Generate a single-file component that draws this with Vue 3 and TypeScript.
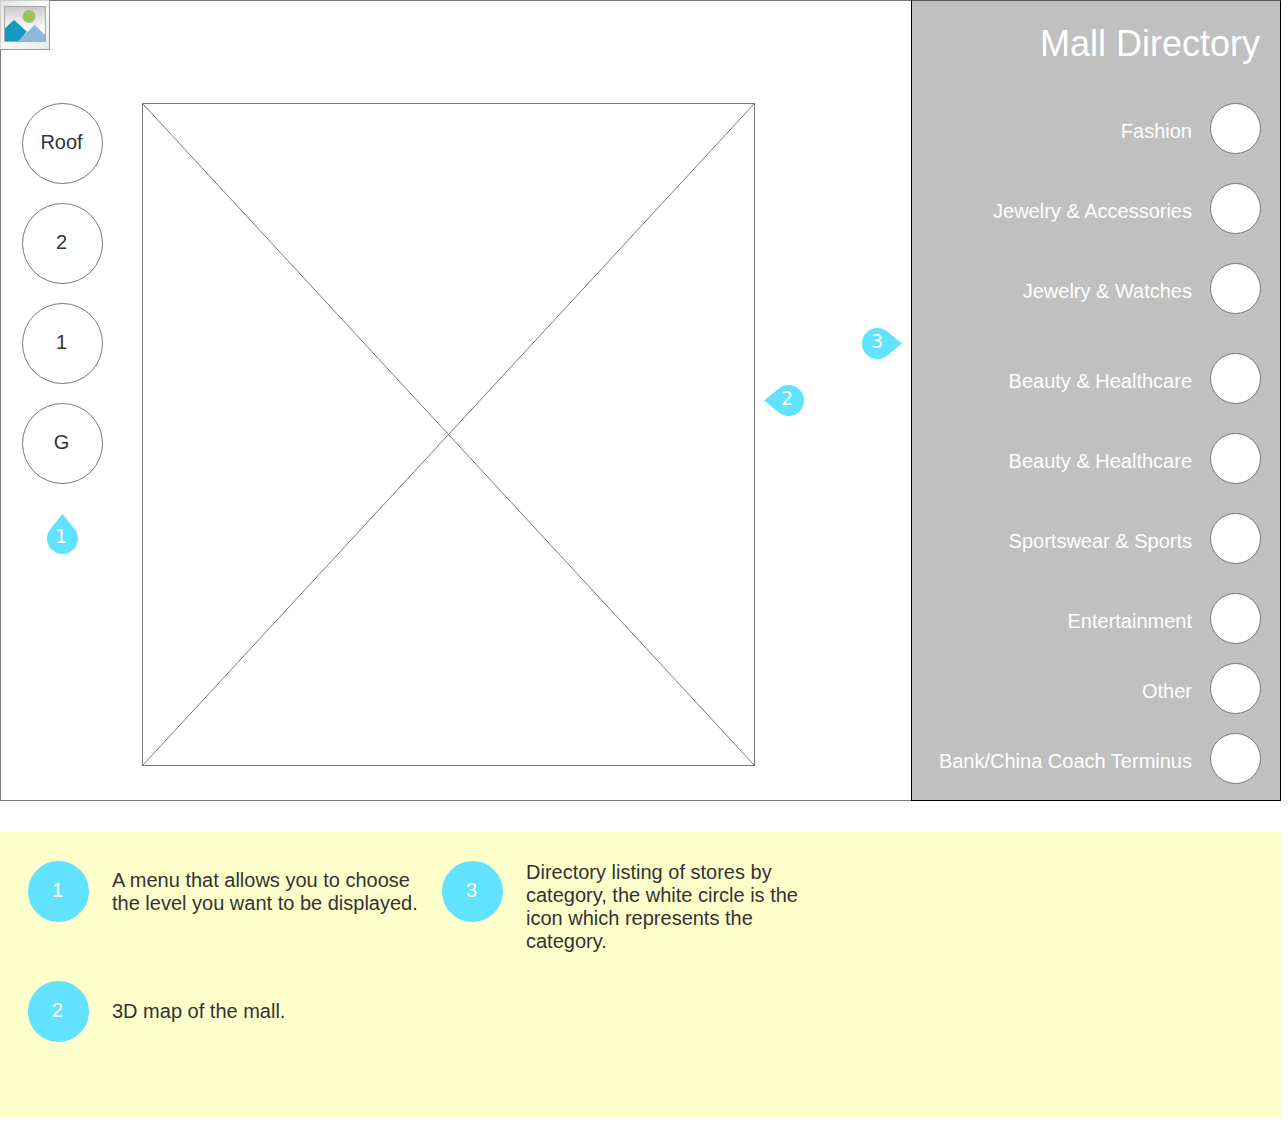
<script setup lang="ts">
type Direction = 'up' | 'left' | 'right'

interface Drop {
  width: number
  height: number
  path: string
  x: number
  y: number
}

interface Category {
  name: string
  spacing?: 'wide' | 'tight'
}

interface Note {
  id: number
  text: string
}

const levels: string[] = ['Roof', '2', '1', 'G']

const categories: Category[] = [
  { name: 'Fashion' },
  { name: 'Jewelry & Accessories' },
  { name: 'Jewelry & Watches' },
  { name: 'Beauty & Healthcare', spacing: 'wide' },
  { name: 'Beauty & Healthcare' },
  { name: 'Sportswear & Sports' },
  { name: 'Entertainment' },
  { name: 'Other', spacing: 'tight' },
  { name: 'Bank/China Coach Terminus', spacing: 'tight' },
]

const notes: Note[] = [
  { id: 1, text: 'A menu that allows you to choose the level you want to be displayed.' },
  {
    id: 3,
    text: 'Directory listing of stores by category, the white circle is the icon which represents the category.',
  },
  { id: 2, text: '3D map of the mall.' },
]

// Teardrop outlines, one for each way a marker can point
const drops: Record<Direction, Drop> = {
  up: {
    width: 31,
    height: 40,
    path: 'M15.5 0 L27 14.2 C29.5 17.3 31 20.5 31 24.5 A15.5 15.5 0 0 1 0 24.5 C0 20.5 1.5 17.3 4 14.2 Z',
    x: 14,
    y: 29,
  },
  left: {
    width: 40,
    height: 31,
    path: 'M0 15.5 L14.2 4 C17.3 1.5 20.5 0 24.5 0 A15.5 15.5 0 0 1 24.5 31 C20.5 31 17.3 29.5 14.2 27 Z',
    x: 23,
    y: 20,
  },
  right: {
    width: 40,
    height: 31,
    path: 'M40 15.5 L25.8 4 C22.7 1.5 19.5 0 15.5 0 A15.5 15.5 0 0 0 15.5 31 C19.5 31 22.7 29.5 25.8 27 Z',
    x: 15,
    y: 20,
  },
}

const sideMarkers: { id: number; direction: Direction }[] = [
  { id: 2, direction: 'left' },
  { id: 3, direction: 'right' },
]
</script>

<template>
  <div class="page">
    <div class="screen">
      <main class="viewer">
        <header class="brand">
          <svg class="logo" width="50" height="50" viewBox="0 0 50 50" role="img" aria-label="Logo">
            <defs>
              <linearGradient id="paper" x1="0" y1="0" x2="1" y2="1">
                <stop offset="0" stop-color="#e4e4e4" />
                <stop offset="0.5" stop-color="#fafafa" />
                <stop offset="1" stop-color="#e8e8e8" />
              </linearGradient>
              <linearGradient id="sky" x1="0" y1="0" x2="0" y2="1">
                <stop offset="0" stop-color="#c9c9c9" />
                <stop offset="0.6" stop-color="#fafafa" />
              </linearGradient>
            </defs>
            <rect width="50" height="50" fill="#cfcfcf" />
            <path d="M49 0h1v50H0v-1h49z" fill="#999" />
            <rect x="1" y="1" width="48" height="48" fill="url(#paper)" />
            <rect x="4.5" y="6.5" width="41" height="35" fill="url(#sky)" />
            <circle cx="29" cy="16.5" r="6" fill="#96c954" stroke="#a9b39c" />
            <path d="M5 28L14 19.5L27 31.5L19 41H5z" fill="#1598c4" />
            <path d="M18.500 41L34.5 24.5L45 34.5V41z" fill="#8cbadb" />
            <path d="M5 28L14 19.5L27 31.5L34.5 24.5L45 34.5" fill="none" stroke="#fff" stroke-opacity="0.5" />
            <rect x="4.5" y="6.5" width="41" height="35" fill="none" stroke="#a8a8a8" />
          </svg>
        </header>

        <div class="floor">
          <nav class="levels" aria-label="Levels">
            <button v-for="level in levels" :key="level" type="button" class="level">{{ level }}</button>
            <svg class="marker" :width="drops.up.width" :height="drops.up.height">
              <path :d="drops.up.path" />
              <text :x="drops.up.x" :y="drops.up.y">1</text>
            </svg>
          </nav>

          <svg class="map" role="img" aria-label="Mall map">
            <line x1="0" y1="0" x2="100%" y2="100%" />
            <line x1="0" y1="100%" x2="100%" y2="0" />
          </svg>

          <div class="pointers">
            <svg
              v-for="marker in sideMarkers"
              :key="marker.id"
              class="marker"
              :class="marker.direction"
              :width="drops[marker.direction].width"
              :height="drops[marker.direction].height"
            >
              <path :d="drops[marker.direction].path" />
              <text :x="drops[marker.direction].x" :y="drops[marker.direction].y">{{ marker.id }}</text>
            </svg>
          </div>
        </div>
      </main>

      <aside class="directory">
        <h1>Mall Directory</h1>
        <ul>
          <li v-for="(category, index) in categories" :key="index" :class="category.spacing">
            <button type="button" class="category">
              <span class="name">{{ category.name }}</span>
              <span class="dot"></span>
            </button>
          </li>
        </ul>
      </aside>
    </div>

    <section class="notes" aria-label="Notes">
      <div v-for="note in notes" :key="note.id" class="note">
        <span class="number">{{ note.id }}</span>
        <p>{{ note.text }}</p>
      </div>
    </section>
  </div>
</template>

<style>
body {
  margin: 0;
  background: #fff;
}
</style>

<style scoped>
* {
  box-sizing: border-box;
}

.page {
  padding-right: 7px;
  color: #333;
  font-family: 'Liberation Sans', Arial, sans-serif;
  font-size: 20px;
  line-height: 23px;
}

button {
  padding: 0;
  font: inherit;
  color: inherit;
  cursor: pointer;
}

.screen {
  display: flex;
}

.viewer {
  flex: 1;
  min-width: 0;
  display: flex;
  flex-direction: column;
  padding-bottom: 34px;
  border: 1px solid #797979;
  border-right: 0;
}

.brand {
  height: 102px;
}

.logo {
  display: block;
  margin: -1px;
}

.floor {
  flex: 1;
  display: flex;
  padding-left: 21px;
}

.levels {
  display: flex;
  flex-direction: column;
  align-items: center;
  gap: 19px;
  margin-right: 39px;
}

.level {
  width: 81px;
  height: 81px;
  padding: 0 2px 2px 0;
  border: 1px solid #797979;
  border-radius: 50%;
  background: #fff;
}

.levels .marker {
  margin-top: 11px;
}

.marker {
  flex: none;
  display: block;
}

.marker path {
  fill: #61e2ff;
}

.marker text {
  fill: #fff;
  font-family: 'DejaVu Sans', sans-serif;
  font-size: 19px;
  text-anchor: middle;
}

.map {
  flex: 1;
  min-width: 0;
  border: 1px solid #797979;
}

.map line {
  stroke: #797979;
}

.pointers {
  width: 156px;
  display: flex;
  justify-content: space-between;
  padding: 0 9px;
}

.pointers .left {
  margin-top: 282px;
}

.pointers .right {
  margin-top: 225px;
}

.directory {
  flex: none;
  width: 370px;
  padding: 22px 19px 16px;
  border: 1px solid #000;
  border-top-color: #5c5c5c;
  background: #c0c0c0;
  color: #fff;
  text-align: right;
}

h1 {
  margin: 0;
  padding-right: 1px;
  font-size: 36px;
  font-weight: 400;
  line-height: 41px;
}

ul {
  margin: 39px 0 0;
  padding: 0;
  list-style: none;
}

li + li {
  margin-top: 29px;
}

li.wide {
  margin-top: 39px;
}

li.tight {
  margin-top: 19px;
}

.category {
  width: 100%;
  display: flex;
  align-items: center;
  justify-content: flex-end;
  gap: 18px;
  border: 0;
  background: none;
}

.name {
  padding-top: 6px;
}

.dot {
  width: 51px;
  height: 51px;
  border: 1px solid #797979;
  border-radius: 50%;
  background: #fff;
}

.notes {
  display: grid;
  grid-template-columns: repeat(2, minmax(0, 391px));
  gap: 28px 23px;
  margin-top: 31px;
  padding: 29px 28px 75px;
  background: #ffc;
}

.note {
  display: flex;
  gap: 23px;
  align-self: start;
}

.number {
  flex: none;
  width: 61px;
  height: 61px;
  display: flex;
  align-items: center;
  justify-content: center;
  padding: 0 2px 2px 0;
  border-radius: 50%;
  background: #61e2ff;
  color: #fff;
}

p {
  align-self: center;
  margin: 0;
}
</style>
